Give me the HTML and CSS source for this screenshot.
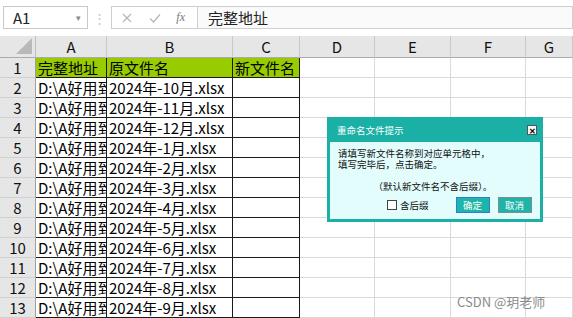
FILE: index.html
```html
<!DOCTYPE html>
<html lang="zh">
<head>
<meta charset="utf-8">
<link rel="stylesheet" href="styles.css">
</head>
<body>
<div class="app">
  <div class="fbar">
    <div class="namebox"><span>A1</span><span class="caret">▾</span></div>
    <div class="grip">⋮</div>
    <div class="fxbox">
      <svg width="14" height="14" viewBox="0 0 14 14"><path d="M3 3 L11 11 M11 3 L3 11" stroke="#b5b5b5" stroke-width="1.2" fill="none"/></svg>
      <svg width="14" height="14" viewBox="0 0 14 14"><path d="M2 7.5 L5.5 11 L12 3.5" stroke="#b5b5b5" stroke-width="1.2" fill="none"/></svg>
      <span class="fx">fx</span>
    </div>
    <div class="finput">完整地址</div>
  </div>
  <div class="sheet">
    <div class="corner"><span class="tri"></span></div>
    <div class="ch">A</div><div class="ch">B</div><div class="ch">C</div><div class="ch">D</div><div class="ch">E</div><div class="ch">F</div><div class="ch">G</div>

    <div class="rh">1</div><div class="c d g a">完整地址</div><div class="c d g">原文件名</div><div class="c d g">新文件名</div><div class="c"></div><div class="c"></div><div class="c"></div><div class="c"></div>
    <div class="rh">2</div><div class="c d a">D:\A好用到</div><div class="c d">2024年-10月.xlsx</div><div class="c d"></div><div class="c"></div><div class="c"></div><div class="c"></div><div class="c"></div>
    <div class="rh">3</div><div class="c d a">D:\A好用到</div><div class="c d">2024年-11月.xlsx</div><div class="c d"></div><div class="c"></div><div class="c"></div><div class="c"></div><div class="c"></div>
    <div class="rh">4</div><div class="c d a">D:\A好用到</div><div class="c d">2024年-12月.xlsx</div><div class="c d"></div><div class="c"></div><div class="c"></div><div class="c"></div><div class="c"></div>
    <div class="rh">5</div><div class="c d a">D:\A好用到</div><div class="c d">2024年-1月.xlsx</div><div class="c d"></div><div class="c"></div><div class="c"></div><div class="c"></div><div class="c"></div>
    <div class="rh">6</div><div class="c d a">D:\A好用到</div><div class="c d">2024年-2月.xlsx</div><div class="c d"></div><div class="c"></div><div class="c"></div><div class="c"></div><div class="c"></div>
    <div class="rh">7</div><div class="c d a">D:\A好用到</div><div class="c d">2024年-3月.xlsx</div><div class="c d"></div><div class="c"></div><div class="c"></div><div class="c"></div><div class="c"></div>
    <div class="rh">8</div><div class="c d a">D:\A好用到</div><div class="c d">2024年-4月.xlsx</div><div class="c d"></div><div class="c"></div><div class="c"></div><div class="c"></div><div class="c"></div>
    <div class="rh">9</div><div class="c d a">D:\A好用到</div><div class="c d">2024年-5月.xlsx</div><div class="c d"></div><div class="c"></div><div class="c"></div><div class="c"></div><div class="c"></div>
    <div class="rh">10</div><div class="c d a">D:\A好用到</div><div class="c d">2024年-6月.xlsx</div><div class="c d"></div><div class="c"></div><div class="c"></div><div class="c"></div><div class="c"></div>
    <div class="rh">11</div><div class="c d a">D:\A好用到</div><div class="c d">2024年-7月.xlsx</div><div class="c d"></div><div class="c"></div><div class="c"></div><div class="c"></div><div class="c"></div>
    <div class="rh">12</div><div class="c d a">D:\A好用到</div><div class="c d">2024年-8月.xlsx</div><div class="c d"></div><div class="c"></div><div class="c"></div><div class="c"></div><div class="c"></div>
    <div class="rh">13</div><div class="c d a">D:\A好用到</div><div class="c d">2024年-9月.xlsx</div><div class="c d"></div><div class="c"></div><div class="c"></div><div class="c"></div><div class="c"></div>
  </div>

  <div class="dialog">
    <div class="dtitle"><span>重命名文件提示</span><span class="dclose">✕</span></div>
    <div class="dbody">
      <p class="dline">请填写新文件名称到对应单元格中，<br>填写完毕后，点击确定。</p>
      <p class="dnote">（默认新文件名不含后缀）。</p>
      <div class="dactions">
        <label class="chk"><span class="box"></span>含后缀</label>
        <span class="btn ok">确定</span>
        <span class="btn">取消</span>
      </div>
    </div>
  </div>

  <div class="wm">CSDN @玥老师</div>
</div>
</body>
</html>
```

FILE: styles.css
```css
* { box-sizing: border-box; }
html, body { margin: 0; padding: 0; background: #fff; }
body { font-family: "Noto Sans CJK SC", "Noto Sans", sans-serif; color: #000; }
.app { position: relative; width: 573px; height: 318px; overflow: hidden; }

.fbar { display: flex; align-items: flex-start; height: 36px; padding-top: 6px; background: #fff; }
.namebox { margin-left: 3px; width: 85px; height: 23px; border: 1px solid #c8c8c8; display: flex; align-items: center; justify-content: space-between; padding: 0 6px 0 9px; font-size: 15px; line-height: 1; color: #222; }
.namebox .caret { font-size: 9px; color: #888; }
.grip { width: 23px; height: 23px; text-align: center; color: #c4c4c4; font-size: 13px; line-height: 23px; }
.fxbox { width: 86px; height: 23px; border: 1px solid #cfcfcf; border-right: none; display: flex; align-items: center; justify-content: space-between; padding: 0 12px 0 8px; background: #fff; }
.fxbox .fx { font-family: "Liberation Serif", serif; font-style: italic; font-size: 12px; color: #777; }
.finput { flex: 1; height: 23px; border: 1px solid #cfcfcf; background: #fafafa; font-size: 15px; line-height: 21px; padding-left: 10px; color: #222; }

.sheet { display: grid; grid-template-columns: 36px 71px 126px 67px 75px 76px 75px 47px; grid-template-rows: 22px repeat(13, 20px); font-size: 15px; }
.corner { background: #e6e6e6; border-right: 1px solid #bdbdbd; border-bottom: 1px solid #ababab; position: relative; }
.tri { position: absolute; right: 3px; bottom: 3px; width: 0; height: 0; border-left: 16px solid transparent; border-bottom: 16px solid #b9b9b9; }
.ch { background: #e6e6e6; border-right: 1px solid #c9c9c9; border-bottom: 1px solid #ababab; text-align: center; line-height: 21px; color: #111; }
.rh { background: #e6e6e6; border-right: 1px solid #9e9e9e; border-bottom: 1px solid #d0d0d0; text-align: center; line-height: 19px; color: #111; }
.c { border-right: 1px solid #dadada; border-bottom: 1px solid #dadada; line-height: 19px; white-space: nowrap; overflow: hidden; padding-left: 2px; }
.c.d { border-right-color: #1a1a1a; border-bottom-color: #1a1a1a; }
.c.g { background: #99cc00; }

.dialog { position: absolute; left: 327px; top: 117px; width: 216px; height: 105px; background: #1ab0a6; padding: 0 3px 3px 3px; font-size: 9.5px; display: flex; flex-direction: column; }
.dtitle { flex: 0 0 25px; height: 25px; display: flex; align-items: center; justify-content: space-between; color: #fff; padding: 0 3px 0 7px; }
.dclose { width: 10px; height: 10px; background: #f4f4f4; color: #000; font-size: 8px; line-height: 10px; text-align: center; font-weight: bold; border: 1px solid #555; }
.dbody { flex: 1; background: #e2fdfc; padding: 6px 0 0 8px; color: #111; }
.dline { margin: 0; line-height: 11px; white-space: nowrap; }
.dnote { margin: 11px 0 0 0; text-align: center; padding-right: 12px; line-height: 11px; white-space: nowrap; }
.dactions { display: flex; align-items: center; margin-top: 5px; padding-left: 49px; white-space: nowrap; }
.chk { display: flex; align-items: center; gap: 3px; margin-right: 27px; white-space: nowrap; }
.box { flex: 0 0 10px; width: 10px; height: 10px; border: 1px solid #444; background: #fff; }
.btn { flex: 0 0 34px; width: 34px; height: 16px; background: #1fb4a8; color: #fff; text-align: center; line-height: 14px; border: 1px solid #7a8f8d; margin-right: 8px; }
.btn.ok { border-color: #2a7fd4; }

.wm { position: absolute; left: 457px; top: 292px; font-family: "Noto Sans CJK SC", sans-serif; font-size: 13px; color: #8a8a8a; }
```
